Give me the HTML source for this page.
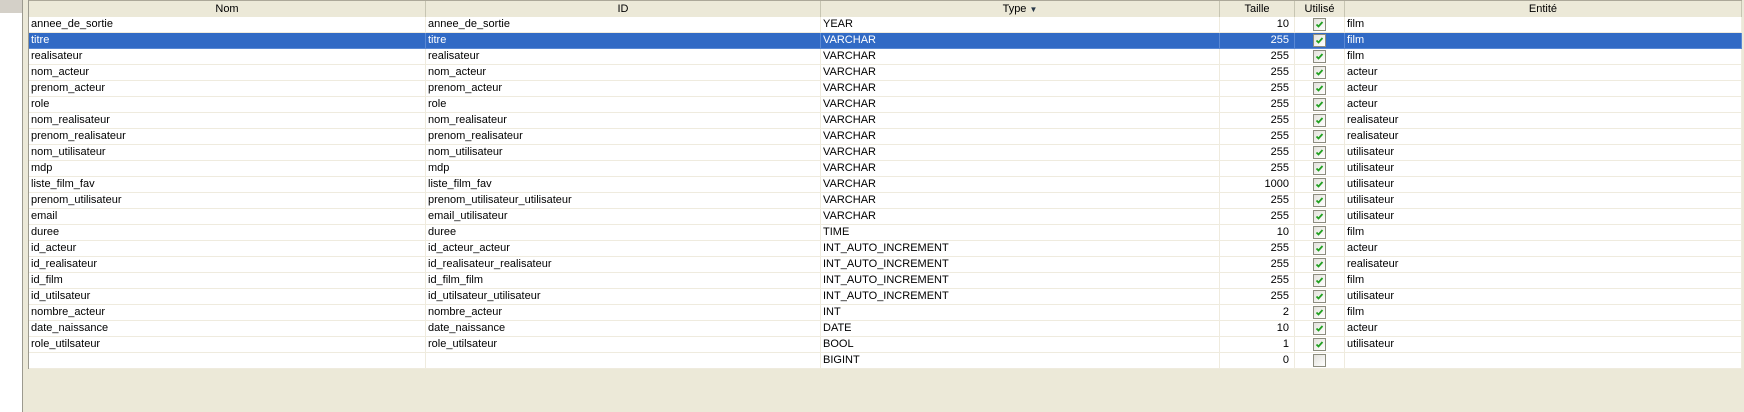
<!DOCTYPE html><html><head><style>
body{margin:0;width:1744px;height:412px;background:#ECE9D8;position:relative;overflow:hidden;font-family:"Liberation Sans",sans-serif;font-size:11px;color:#000}
#lp{position:absolute;left:0;top:0;width:22px;height:412px;background:#fff;border-right:1px solid #9c9a8f}
#lp div{height:13px;background:#d4d0c8}
#t{position:absolute;left:28px;top:0;width:1713px;border-left:1px solid #9c9a8f}
.h,.r{display:flex;height:16px}
.h{height:16px;background:#ECE9D8;border-top:1px solid #aca899;border-bottom:0}
.h div{border-right:1px solid #c7c5b2;text-align:center;line-height:16px;box-sizing:border-box}
.r{background:#fff}
.r div{border-right:1px solid #efebde;border-bottom:1px solid #efebde;box-sizing:border-box;line-height:15px;padding-left:2px;white-space:nowrap;overflow:hidden}
.r.s{background:#316AC5;color:#fff}
.r.s div{border-color:#5a89d4}
.c1{width:397px}.c2{width:395px}.c3{width:399px}.c4{width:75px;text-align:right;padding-right:4px}.c5{width:50px;position:relative}.c6{width:397px}
.r .c4{text-align:right;padding-right:5px}
.cb{position:absolute;left:18px;top:1px;width:11px;height:11px;border:1px solid #8c8c7e;background:linear-gradient(135deg,#e3e2dc,#fff)}
.cb svg{position:absolute;left:1px;top:1px}
</style></head><body>
<div id="lp"><div></div></div>
<div id="t">
<div class="h"><div class="c1">Nom</div><div class="c2">ID</div><div class="c3">Type <span style="font-size:8px;color:#283848">&#9660;</span></div><div class="c4" style="text-align:center;padding:0">Taille</div><div class="c5">Utilisé</div><div class="c6">Entité</div></div>
<div id="rows"></div>
</div>
<script>
var d=[["annee_de_sortie","annee_de_sortie","YEAR","10","film"],["titre","titre","VARCHAR","255","film"],["realisateur","realisateur","VARCHAR","255","film"],["nom_acteur","nom_acteur","VARCHAR","255","acteur"],["prenom_acteur","prenom_acteur","VARCHAR","255","acteur"],["role","role","VARCHAR","255","acteur"],["nom_realisateur","nom_realisateur","VARCHAR","255","realisateur"],["prenom_realisateur","prenom_realisateur","VARCHAR","255","realisateur"],["nom_utilisateur","nom_utilisateur","VARCHAR","255","utilisateur"],["mdp","mdp","VARCHAR","255","utilisateur"],["liste_film_fav","liste_film_fav","VARCHAR","1000","utilisateur"],["prenom_utilisateur","prenom_utilisateur_utilisateur","VARCHAR","255","utilisateur"],["email","email_utilisateur","VARCHAR","255","utilisateur"],["duree","duree","TIME","10","film"],["id_acteur","id_acteur_acteur","INT_AUTO_INCREMENT","255","acteur"],["id_realisateur","id_realisateur_realisateur","INT_AUTO_INCREMENT","255","realisateur"],["id_film","id_film_film","INT_AUTO_INCREMENT","255","film"],["id_utilsateur","id_utilsateur_utilisateur","INT_AUTO_INCREMENT","255","utilisateur"],["nombre_acteur","nombre_acteur","INT","2","film"],["date_naissance","date_naissance","DATE","10","acteur"],["role_utilsateur","role_utilsateur","BOOL","1","utilisateur"],["","","BIGINT","0",""]];
var h="";d.forEach(function(r,i){var chk=i<21?'<svg width="9" height="9" viewBox="0 0 9 9"><path d="M1.5 4.5L3.5 6.5L7.5 2" stroke="#21a121" stroke-width="1.8" fill="none"/></svg>':'';
h+='<div class="r'+(i==1?' s':'')+'"><div class="c1">'+r[0]+'</div><div class="c2">'+r[1]+'</div><div class="c3">'+r[2]+'</div><div class="c4">'+r[3]+'</div><div class="c5"><span class="cb">'+chk+'</span></div><div class="c6">'+r[4]+'</div></div>';});
document.getElementById("rows").innerHTML=h;
</script>
</body></html>
